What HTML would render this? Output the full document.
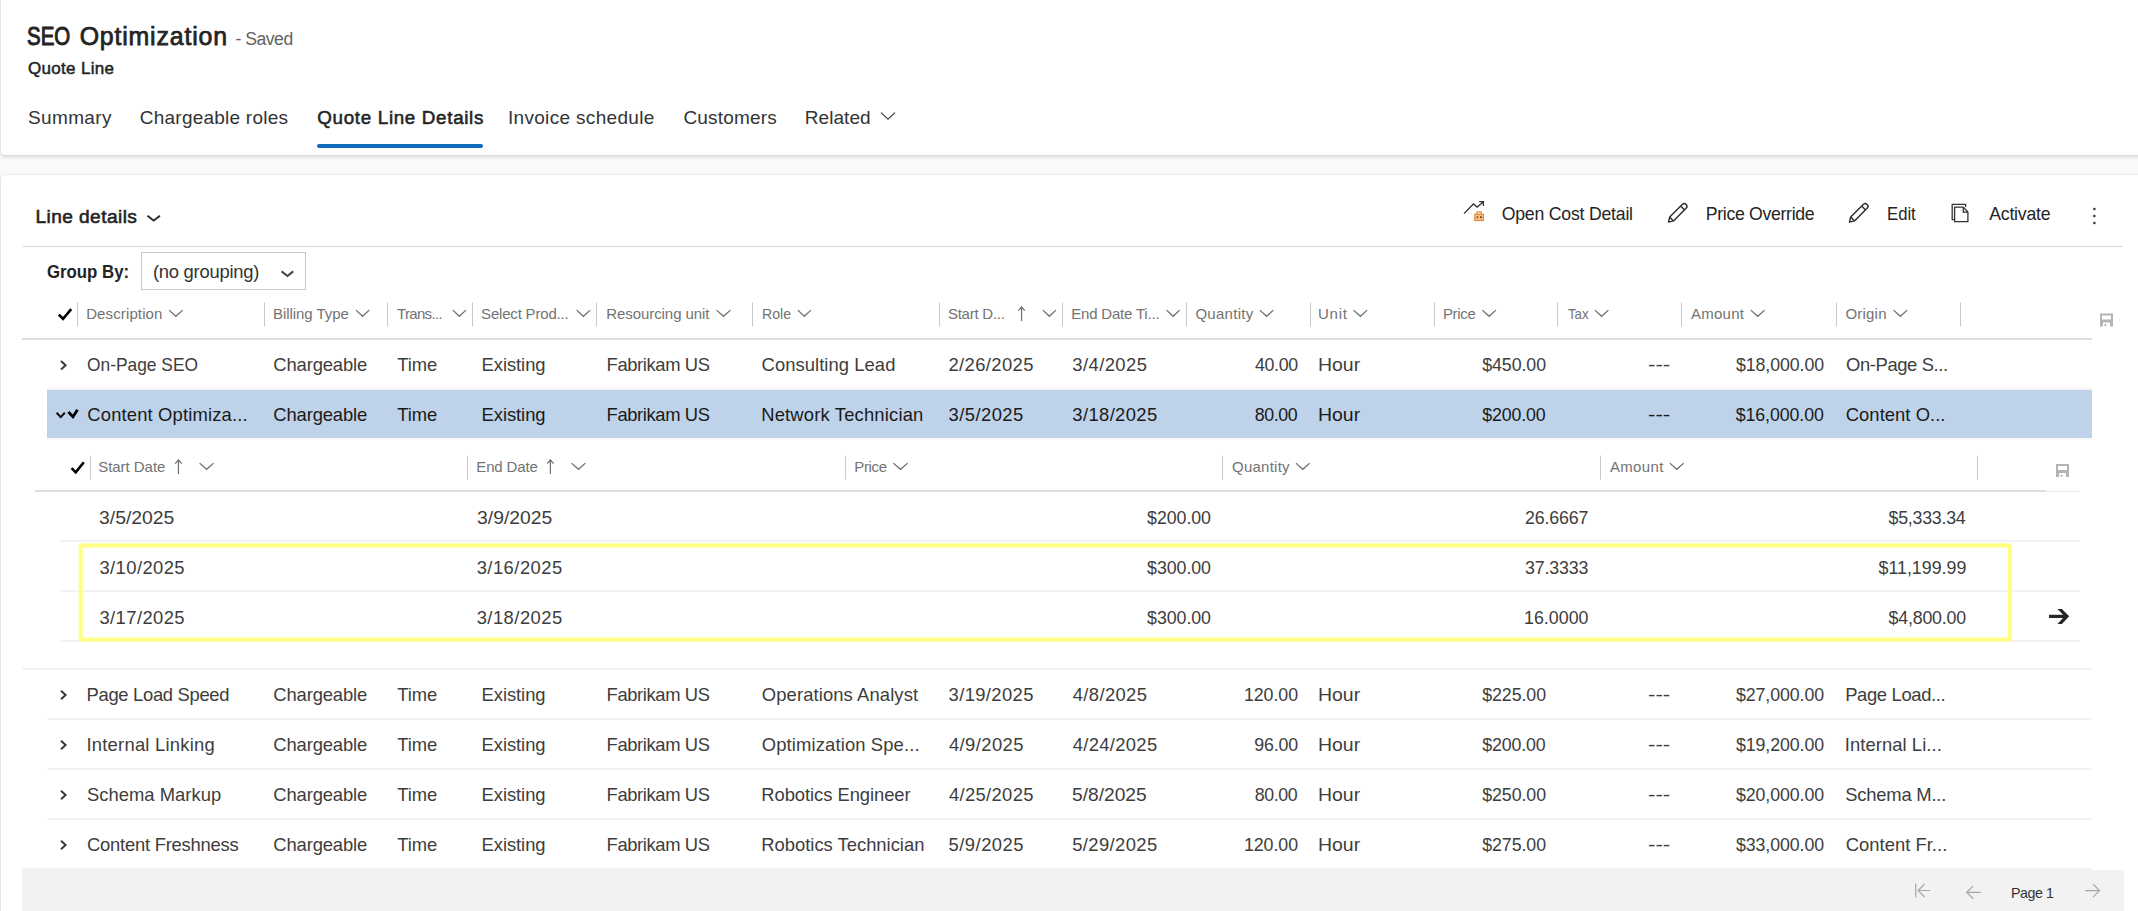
<!DOCTYPE html>
<html lang="en"><head><meta charset="utf-8"><title>SEO Optimization - Quote Line</title>
<style>
html,body{margin:0;padding:0;background:#fafafa}
body{width:2138px;height:911px;overflow:hidden}
#root{position:relative;width:2138px;height:911px;overflow:hidden;background:#fafafa;font-family:"Liberation Sans",sans-serif}
.card{position:absolute;background:#fff;border-radius:4px;box-shadow:0 2px 4px rgba(0,0,0,.13),0 0 2px rgba(0,0,0,.12)}
#c1{left:1px;top:-8px;width:2160px;height:163px}
#c2{left:1px;top:175px;width:2160px;height:760px}
.b{position:absolute}
.t{position:absolute;white-space:pre}
svg#ov{position:absolute;left:0;top:0}

</style></head>
<body>
<div id="root">
<div class="card" id="c1"></div>
<div class="card" id="c2"></div>
<div class="b" style="left:141px;top:252px;width:165px;height:38px;background:#fff;box-sizing:border-box;border:1px solid #c8c8c8"></div>
<div class="b" style="left:22px;top:338px;width:2070px;height:2px;background:#dedede;"></div>
<div class="b" style="left:47px;top:388px;width:2045px;height:2px;background:#f4f4f4;"></div>
<div class="b" style="left:47px;top:438px;width:2045px;height:2px;background:#f8f8f8;"></div>
<div class="b" style="left:47px;top:718px;width:2045px;height:2px;background:#f3f3f3;"></div>
<div class="b" style="left:47px;top:768px;width:2045px;height:2px;background:#f3f3f3;"></div>
<div class="b" style="left:47px;top:818px;width:2045px;height:2px;background:#f3f3f3;"></div>
<div class="b" style="left:22px;top:668px;width:2070px;height:2px;background:#f3f3f3;"></div>
<div class="b" style="left:47px;top:390px;width:2045px;height:48px;background:#bed3e9;"></div>
<div class="b" style="left:35px;top:490px;width:2011px;height:2px;background:#dedede;"></div>
<div class="b" style="left:2046px;top:491px;width:34px;height:1px;background:#e6e6e6;"></div>
<div class="b" style="left:60px;top:540px;width:2020px;height:2px;background:#f2f2f2;"></div>
<div class="b" style="left:60px;top:590px;width:2020px;height:2px;background:#f2f2f2;"></div>
<div class="b" style="left:60px;top:640px;width:2020px;height:2px;background:#f2f2f2;"></div>
<div class="b" style="left:22px;top:868px;width:2070px;height:50px;background:#f2f2f2;"></div>
<div class="b" style="left:2092px;top:870px;width:32px;height:50px;background:#f2f2f2;"></div>
<svg id="ov" width="2138" height="911" viewBox="0 0 2138 911" fill="none">
<rect x="317" y="144" width="166" height="4" rx="2" fill="#0f6cbd"/>
<path d="M880.951 112.61999999999999L888.0 119.16399999999999L895.049 112.61999999999999" stroke="#424242" stroke-width="1.3" stroke-linecap="butt" stroke-linejoin="miter"/>
<path d="M147.513 215.76L153.7 220.632L159.887 215.76" stroke="#242424" stroke-width="1.9" stroke-linecap="butt" stroke-linejoin="miter"/>
<path d="M23 246.5L2122.5 246.5" stroke="#d4d4d4" stroke-width="1"/>
<path d="M1464 213.6L1473.4 204L1477.1 207.1L1483.2 202M1479.2 201.6H1483.4V205.9" stroke="#333" stroke-width="1.3"/>
<rect x="1476.9" y="212" width="4.4" height="2.6" stroke="#e08a3c" stroke-width="1.2"/>
<rect x="1474.7" y="214.2" width="8.8" height="6.4" fill="#f6c08c" stroke="#e08a3c" stroke-width="1.1"/>
<rect x="1476.6" y="216.3" width="1.6" height="1.9" fill="#8a4b12"/><rect x="1480" y="216.3" width="1.8" height="2" fill="#8a4b12"/>
<g transform="translate(1667.8 202.7)" stroke="#2e2e2e" stroke-width="1.45" stroke-linejoin="round"><path d="M0.7 19.4L1.9 14.4L14.7 1.6a2.7 2.7 0 0 1 3.8 3.8L5.7 18.2Z"/><path d="M12.9 3.4L16.7 7.2M1.9 14.4L5.7 18.2"/></g>
<g transform="translate(1848.8 202.7)" stroke="#2e2e2e" stroke-width="1.45" stroke-linejoin="round"><path d="M0.7 19.4L1.9 14.4L14.7 1.6a2.7 2.7 0 0 1 3.8 3.8L5.7 18.2Z"/><path d="M12.9 3.4L16.7 7.2M1.9 14.4L5.7 18.2"/></g>
<path d="M1954.6 207.1H1963.3L1967.9 212.1V221.6H1954.6Z M1963.3 207.1V212.1H1967.9" stroke="#333" stroke-width="1.3" stroke-linejoin="miter"/>
<path d="M1954.6 219.6H1952.2V204.4H1965.6V207.1" stroke="#333" stroke-width="1.3"/>
<circle cx="2094.4" cy="208.9" r="1.25" fill="#333"/>
<circle cx="2094.4" cy="215.9" r="1.25" fill="#333"/>
<circle cx="2094.4" cy="223.1" r="1.25" fill="#333"/>
<path d="M281.64000000000004 271.40000000000003L287.45000000000005 275.96L293.26 271.40000000000003" stroke="#444" stroke-width="2" stroke-linecap="butt" stroke-linejoin="miter"/>
<path d="M58.8 314.625L63.04 318.8L71.2 309.1" stroke="#000" stroke-width="2.6" stroke-linejoin="miter"/>
<path d="M77.5 302.5L77.5 326.5" stroke="#c8c8c8" stroke-width="1"/>
<path d="M264.5 302.5L264.5 326.5" stroke="#c8c8c8" stroke-width="1"/>
<path d="M387.5 302.5L387.5 326.5" stroke="#c8c8c8" stroke-width="1"/>
<path d="M472.5 302.5L472.5 326.5" stroke="#c8c8c8" stroke-width="1"/>
<path d="M596.5 302.5L596.5 326.5" stroke="#c8c8c8" stroke-width="1"/>
<path d="M752.5 302.5L752.5 326.5" stroke="#c8c8c8" stroke-width="1"/>
<path d="M939.5 302.5L939.5 326.5" stroke="#c8c8c8" stroke-width="1"/>
<path d="M1062.5 302.5L1062.5 326.5" stroke="#c8c8c8" stroke-width="1"/>
<path d="M1186.5 302.5L1186.5 326.5" stroke="#c8c8c8" stroke-width="1"/>
<path d="M1310.5 302.5L1310.5 326.5" stroke="#c8c8c8" stroke-width="1"/>
<path d="M1434.5 302.5L1434.5 326.5" stroke="#c8c8c8" stroke-width="1"/>
<path d="M1557.5 302.5L1557.5 326.5" stroke="#c8c8c8" stroke-width="1"/>
<path d="M1681.5 302.5L1681.5 326.5" stroke="#c8c8c8" stroke-width="1"/>
<path d="M1836.5 302.5L1836.5 326.5" stroke="#c8c8c8" stroke-width="1"/>
<path d="M1960.5 302.5L1960.5 326.5" stroke="#c8c8c8" stroke-width="1"/>
<path d="M169.0875 310.1L175.875 316.3L182.6625 310.1" stroke="#6e6e6e" stroke-width="1.25" stroke-linecap="butt" stroke-linejoin="miter"/>
<path d="M356.0875 310.1L362.625 316.3L369.1625 310.1" stroke="#6e6e6e" stroke-width="1.25" stroke-linecap="butt" stroke-linejoin="miter"/>
<path d="M452.8375 310.1L459.375 316.3L465.9125 310.1" stroke="#6e6e6e" stroke-width="1.25" stroke-linecap="butt" stroke-linejoin="miter"/>
<path d="M576.5875 310.1L583.375 316.3L590.1625 310.1" stroke="#6e6e6e" stroke-width="1.25" stroke-linecap="butt" stroke-linejoin="miter"/>
<path d="M716.5875 310.1L723.5 316.3L730.4125 310.1" stroke="#6e6e6e" stroke-width="1.25" stroke-linecap="butt" stroke-linejoin="miter"/>
<path d="M797.8375 310.1L804.375 316.3L810.9125 310.1" stroke="#6e6e6e" stroke-width="1.25" stroke-linecap="butt" stroke-linejoin="miter"/>
<path d="M1042.8375 310.1L1049.375 316.3L1055.9125 310.1" stroke="#6e6e6e" stroke-width="1.25" stroke-linecap="butt" stroke-linejoin="miter"/>
<path d="M1166.5875 310.1L1173.125 316.3L1179.6625 310.1" stroke="#6e6e6e" stroke-width="1.25" stroke-linecap="butt" stroke-linejoin="miter"/>
<path d="M1259.8375 310.1L1266.625 316.3L1273.4125 310.1" stroke="#6e6e6e" stroke-width="1.25" stroke-linecap="butt" stroke-linejoin="miter"/>
<path d="M1353.5875 310.1L1360.375 316.3L1367.1625 310.1" stroke="#6e6e6e" stroke-width="1.25" stroke-linecap="butt" stroke-linejoin="miter"/>
<path d="M1482.3375 310.1L1489.125 316.3L1495.9125 310.1" stroke="#6e6e6e" stroke-width="1.25" stroke-linecap="butt" stroke-linejoin="miter"/>
<path d="M1594.8375 310.1L1601.625 316.3L1608.4125 310.1" stroke="#6e6e6e" stroke-width="1.25" stroke-linecap="butt" stroke-linejoin="miter"/>
<path d="M1750.8375 310.1L1757.75 316.3L1764.6625 310.1" stroke="#6e6e6e" stroke-width="1.25" stroke-linecap="butt" stroke-linejoin="miter"/>
<path d="M1893.5875 310.1L1900.375 316.3L1907.1625 310.1" stroke="#6e6e6e" stroke-width="1.25" stroke-linecap="butt" stroke-linejoin="miter"/>
<path d="M1021.55 321L1021.55 307.1M1018.30 310.6L1021.55 307.0L1024.80 310.6" stroke="#6e6e6e" stroke-width="1.2"/>
<path fill-rule="evenodd" fill="#b4b4b4" d="M2100 313.5h13v13h-13z M2102 315.5v4h9v-4z M2103 322.5v4h7v-4z"/><rect x="2104.6" y="324.3" width="1.7" height="1.7" fill="#9a9a9a"/>
<path d="M61 361.0L65.6 365.2L61 369.4" stroke="#3a3a3a" stroke-width="2"/>
<path d="M61 690.8L65.6 695.0L61 699.2" stroke="#3a3a3a" stroke-width="2"/>
<path d="M61 740.8L65.6 745.0L61 749.2" stroke="#3a3a3a" stroke-width="2"/>
<path d="M61 790.8L65.6 795.0L61 799.2" stroke="#3a3a3a" stroke-width="2"/>
<path d="M61 840.8L65.6 845.0L61 849.2" stroke="#3a3a3a" stroke-width="2"/>
<path d="M56.6 412.7L60.7 417.1L64.8 412.7" stroke="#0a0a0a" stroke-width="2"/>
<path d="M68.4 412L73 416.7L77.5 409.8" stroke="#000" stroke-width="2.8"/>
<path d="M71.6 468.045L75.768 472.4L83.8 462.3" stroke="#000" stroke-width="2.6" stroke-linejoin="miter"/>
<path d="M90.5 455.5L90.5 479.5" stroke="#c8c8c8" stroke-width="1"/>
<path d="M467.5 455.5L467.5 479.5" stroke="#c8c8c8" stroke-width="1"/>
<path d="M845.5 455.5L845.5 479.5" stroke="#c8c8c8" stroke-width="1"/>
<path d="M1222.5 455.5L1222.5 479.5" stroke="#c8c8c8" stroke-width="1"/>
<path d="M1600.5 455.5L1600.5 479.5" stroke="#c8c8c8" stroke-width="1"/>
<path d="M1977.5 455.5L1977.5 479.5" stroke="#c8c8c8" stroke-width="1"/>
<path d="M178.45 474L178.45 460.1M175.20 463.6L178.45 460.0L181.70 463.6" stroke="#6e6e6e" stroke-width="1.2"/>
<path d="M199.63750000000002 463.1L206.60000000000002 469.3L213.5625 463.1" stroke="#6e6e6e" stroke-width="1.25" stroke-linecap="butt" stroke-linejoin="miter"/>
<path d="M550.40 474L550.40 460.1M547.20 463.6L550.40 460.0L553.60 463.6" stroke="#6e6e6e" stroke-width="1.2"/>
<path d="M571.5375 463.1L578.45 469.3L585.3625000000001 463.1" stroke="#6e6e6e" stroke-width="1.25" stroke-linecap="butt" stroke-linejoin="miter"/>
<path d="M893.3375 463.1L900.5 469.3L907.6625 463.1" stroke="#6e6e6e" stroke-width="1.25" stroke-linecap="butt" stroke-linejoin="miter"/>
<path d="M1295.9375 463.1L1302.8 469.3L1309.6625 463.1" stroke="#6e6e6e" stroke-width="1.25" stroke-linecap="butt" stroke-linejoin="miter"/>
<path d="M1669.8375 463.1L1676.75 469.3L1683.6625 463.1" stroke="#6e6e6e" stroke-width="1.25" stroke-linecap="butt" stroke-linejoin="miter"/>
<path fill-rule="evenodd" fill="#b4b4b4" d="M2056 464h13v13h-13z M2058 466v4h9v-4z M2059 473v4h7v-4z"/><rect x="2060.6" y="474.8" width="1.7" height="1.7" fill="#9a9a9a"/>
<rect x="80.65" y="545.45" width="1929.3" height="94.1" stroke="#ffff84" stroke-width="4.1"/>
<path fill="#262626" d="M2057.4 609.05H2061.95L2069.15 616.3L2061.95 623.9H2057.4L2064.6 616.3Z M2049.05 614.65H2065V617.95H2049.05Z"/>
<path d="M1915.7 883.5V897.6M1918.2 890.5H1930.4M1924.6 884L1918.1 890.5L1924.6 897" stroke="#a6a6a6" stroke-width="1.2"/>
<path d="M1966.6 892.3H1980.8M1973.2 885.9L1966.7 892.3L1973.2 898.7" stroke="#a6a6a6" stroke-width="1.2"/>
<path d="M2085 890.6H2099.6M2093 884.1L2099.5 890.6L2093 897.1" stroke="#a6a6a6" stroke-width="1.2"/>
</svg>
<span class="t" id="t0" style="font-size:24.9px;line-height:29.88px;top:22.01px;color:#242424;letter-spacing:0.000px;left:26.71px;-webkit-text-stroke:1.0px #242424;transform:scaleX(0.8211);transform-origin:0 0;">SEO</span>
<span class="t" id="t1" style="font-size:24.9px;line-height:29.88px;top:22.01px;color:#242424;letter-spacing:0.817px;left:79.67px;-webkit-text-stroke:0.75px #242424;">Optimization</span>
<span class="t" id="t2" style="font-size:17.6px;line-height:21.12px;top:29.01px;color:#636363;letter-spacing:-0.497px;left:235.53px;">- Saved</span>
<span class="t" id="t3" style="font-size:17px;line-height:20.40px;top:59.00px;color:#242424;letter-spacing:0.331px;left:27.93px;-webkit-text-stroke:0.5px #242424;">Quote Line</span>
<span class="t" id="t4" style="font-size:19.0px;line-height:22.80px;top:107.00px;color:#333;letter-spacing:0.393px;left:27.91px;">Summary</span>
<span class="t" id="t5" style="font-size:19.0px;line-height:22.80px;top:107.00px;color:#333;letter-spacing:0.234px;left:139.78px;">Chargeable roles</span>
<span class="t" id="t6" style="font-size:18.8px;line-height:22.56px;top:107.00px;color:#242424;letter-spacing:0.676px;left:317.33px;-webkit-text-stroke:0.55px #242424;">Quote Line Details</span>
<span class="t" id="t7" style="font-size:19.0px;line-height:22.80px;top:107.00px;color:#333;letter-spacing:0.329px;left:507.88px;">Invoice schedule</span>
<span class="t" id="t8" style="font-size:19.0px;line-height:22.80px;top:107.00px;color:#333;letter-spacing:0.188px;left:683.38px;">Customers</span>
<span class="t" id="t9" style="font-size:19.0px;line-height:22.80px;top:107.00px;color:#333;letter-spacing:0.061px;left:804.75px;">Related</span>
<span class="t" id="t10" style="font-size:19.1px;line-height:22.92px;top:206.01px;color:#242424;letter-spacing:0.433px;left:35.50px;-webkit-text-stroke:0.6px #242424;">Line details</span>
<span class="t" id="t11" style="font-size:17.7px;line-height:21.24px;top:204.01px;color:#242424;letter-spacing:-0.218px;left:1501.63px;">Open Cost Detail</span>
<span class="t" id="t12" style="font-size:17.7px;line-height:21.24px;top:204.01px;color:#242424;letter-spacing:-0.323px;left:1705.79px;">Price Override</span>
<span class="t" id="t13" style="font-size:17.7px;line-height:21.24px;top:204.01px;color:#242424;letter-spacing:0.000px;left:1887.25px;transform:scaleX(0.9436);transform-origin:0 0;">Edit</span>
<span class="t" id="t14" style="font-size:17.7px;line-height:21.24px;top:204.01px;color:#242424;letter-spacing:-0.211px;left:1989.17px;">Activate</span>
<span class="t" id="t15" style="font-size:18.4px;line-height:22.08px;top:261.01px;color:#242424;letter-spacing:0.000px;left:47.26px;font-weight:700;transform:scaleX(0.9132);transform-origin:0 0;">Group By:</span>
<span class="t" id="t16" style="font-size:18.4px;line-height:22.08px;top:261.01px;color:#333;letter-spacing:-0.251px;left:152.94px;">(no grouping)</span>
<span class="t" id="t17" style="font-size:15.0px;line-height:18.00px;top:305.01px;color:#737373;letter-spacing:0.121px;left:86.17px;">Description</span>
<span class="t" id="t18" style="font-size:15.0px;line-height:18.00px;top:305.01px;color:#737373;letter-spacing:-0.036px;left:272.91px;">Billing Type</span>
<span class="t" id="t19" style="font-size:15.0px;line-height:18.00px;top:305.01px;color:#737373;letter-spacing:-0.687px;left:397.09px;">Trans...</span>
<span class="t" id="t20" style="font-size:15.0px;line-height:18.00px;top:305.01px;color:#737373;letter-spacing:-0.193px;left:481.11px;">Select Prod...</span>
<span class="t" id="t21" style="font-size:15.0px;line-height:18.00px;top:305.01px;color:#737373;letter-spacing:-0.062px;left:606.17px;">Resourcing unit</span>
<span class="t" id="t22" style="font-size:15.0px;line-height:18.00px;top:305.01px;color:#737373;letter-spacing:0.000px;left:761.65px;transform:scaleX(0.9429);transform-origin:0 0;">Role</span>
<span class="t" id="t23" style="font-size:15.0px;line-height:18.00px;top:305.01px;color:#737373;letter-spacing:-0.233px;left:947.89px;">Start D...</span>
<span class="t" id="t24" style="font-size:15.0px;line-height:18.00px;top:305.01px;color:#737373;letter-spacing:-0.188px;left:1071.17px;">End Date Ti...</span>
<span class="t" id="t25" style="font-size:15.0px;line-height:18.00px;top:305.01px;color:#737373;letter-spacing:0.298px;left:1195.39px;">Quantity</span>
<span class="t" id="t26" style="font-size:15.0px;line-height:18.00px;top:305.01px;color:#737373;letter-spacing:0.770px;left:1318.02px;">Unit</span>
<span class="t" id="t27" style="font-size:15.0px;line-height:18.00px;top:305.01px;color:#737373;letter-spacing:-0.319px;left:1442.92px;">Price</span>
<span class="t" id="t28" style="font-size:15.0px;line-height:18.00px;top:305.01px;color:#737373;letter-spacing:0.000px;left:1567.58px;transform:scaleX(0.8829);transform-origin:0 0;">Tax</span>
<span class="t" id="t29" style="font-size:15.0px;line-height:18.00px;top:305.01px;color:#737373;letter-spacing:0.268px;left:1690.88px;">Amount</span>
<span class="t" id="t30" style="font-size:15.0px;line-height:18.00px;top:305.01px;color:#737373;letter-spacing:0.217px;left:1845.39px;">Origin</span>
<span class="t" id="t31" style="font-size:18.4px;line-height:22.08px;top:354.01px;color:#3d3d3d;letter-spacing:0.000px;left:86.70px;transform:scaleX(0.9441);transform-origin:0 0;">On-Page SEO</span>
<span class="t" id="t32" style="font-size:18.4px;line-height:22.08px;top:354.01px;color:#3d3d3d;letter-spacing:-0.141px;left:273.37px;">Chargeable</span>
<span class="t" id="t33" style="font-size:18.4px;line-height:22.08px;top:354.01px;color:#3d3d3d;letter-spacing:-0.093px;left:397.26px;">Time</span>
<span class="t" id="t34" style="font-size:18.4px;line-height:22.08px;top:354.01px;color:#3d3d3d;letter-spacing:-0.060px;left:481.55px;">Existing</span>
<span class="t" id="t35" style="font-size:18.4px;line-height:22.08px;top:354.01px;color:#3d3d3d;letter-spacing:-0.392px;left:606.55px;">Fabrikam US</span>
<span class="t" id="t36" style="font-size:18.4px;line-height:22.08px;top:354.01px;color:#3d3d3d;letter-spacing:0.062px;left:761.59px;">Consulting Lead</span>
<span class="t" id="t37" style="font-size:18.4px;line-height:22.08px;top:354.01px;color:#3d3d3d;letter-spacing:0.402px;left:948.38px;">2/26/2025</span>
<span class="t" id="t38" style="font-size:18.4px;line-height:22.08px;top:354.01px;color:#3d3d3d;letter-spacing:0.450px;left:1072.23px;">3/4/2025</span>
<span class="t" id="t39" style="font-size:17.8px;line-height:21.36px;top:355.01px;color:#3d3d3d;letter-spacing:-0.350px;left:1255.01px;">40.00</span>
<span class="t" id="t40" style="font-size:18.4px;line-height:22.08px;top:354.01px;color:#3d3d3d;letter-spacing:0.000px;left:1318.18px;transform:scaleX(1.0578);transform-origin:0 0;">Hour</span>
<span class="t" id="t41" style="font-size:17.8px;line-height:21.36px;top:355.01px;color:#3d3d3d;letter-spacing:-0.063px;left:1482.18px;">$450.00</span>
<span class="t" id="t42" style="font-size:18.4px;line-height:22.08px;top:354.01px;color:#3d3d3d;letter-spacing:0.000px;left:1647.50px;transform:scaleX(1.2091);transform-origin:0 0;">---</span>
<span class="t" id="t43" style="font-size:17.8px;line-height:21.36px;top:355.01px;color:#3d3d3d;letter-spacing:-0.076px;left:1735.89px;">$18,000.00</span>
<span class="t" id="t44" style="font-size:18.4px;line-height:22.08px;top:354.01px;color:#3d3d3d;letter-spacing:-0.383px;left:1845.99px;">On-Page S...</span>
<span class="t" id="t45" style="font-size:18.4px;line-height:22.08px;top:404.01px;color:#1a1a1a;letter-spacing:0.160px;left:87.31px;">Content Optimiza...</span>
<span class="t" id="t46" style="font-size:18.4px;line-height:22.08px;top:404.01px;color:#1a1a1a;letter-spacing:-0.141px;left:273.37px;">Chargeable</span>
<span class="t" id="t47" style="font-size:18.4px;line-height:22.08px;top:404.01px;color:#1a1a1a;letter-spacing:-0.093px;left:397.26px;">Time</span>
<span class="t" id="t48" style="font-size:18.4px;line-height:22.08px;top:404.01px;color:#1a1a1a;letter-spacing:-0.060px;left:481.55px;">Existing</span>
<span class="t" id="t49" style="font-size:18.4px;line-height:22.08px;top:404.01px;color:#1a1a1a;letter-spacing:-0.392px;left:606.55px;">Fabrikam US</span>
<span class="t" id="t50" style="font-size:18.4px;line-height:22.08px;top:404.01px;color:#1a1a1a;letter-spacing:0.173px;left:761.21px;">Network Technician</span>
<span class="t" id="t51" style="font-size:18.4px;line-height:22.08px;top:404.01px;color:#1a1a1a;letter-spacing:0.447px;left:948.54px;">3/5/2025</span>
<span class="t" id="t52" style="font-size:18.4px;line-height:22.08px;top:404.01px;color:#1a1a1a;letter-spacing:0.370px;left:1072.37px;">3/18/2025</span>
<span class="t" id="t53" style="font-size:17.8px;line-height:21.36px;top:405.01px;color:#1a1a1a;letter-spacing:-0.385px;left:1254.72px;">80.00</span>
<span class="t" id="t54" style="font-size:18.4px;line-height:22.08px;top:404.01px;color:#1a1a1a;letter-spacing:0.000px;left:1318.18px;transform:scaleX(1.0578);transform-origin:0 0;">Hour</span>
<span class="t" id="t55" style="font-size:17.8px;line-height:21.36px;top:405.01px;color:#1a1a1a;letter-spacing:-0.150px;left:1482.28px;">$200.00</span>
<span class="t" id="t56" style="font-size:18.4px;line-height:22.08px;top:404.01px;color:#1a1a1a;letter-spacing:0.000px;left:1647.50px;transform:scaleX(1.2091);transform-origin:0 0;">---</span>
<span class="t" id="t57" style="font-size:17.8px;line-height:21.36px;top:405.01px;color:#1a1a1a;letter-spacing:-0.076px;left:1735.63px;">$16,000.00</span>
<span class="t" id="t58" style="font-size:18.4px;line-height:22.08px;top:404.01px;color:#1a1a1a;letter-spacing:0.045px;left:1845.78px;">Content O...</span>
<span class="t" id="t59" style="font-size:18.4px;line-height:22.08px;top:684.00px;color:#3d3d3d;letter-spacing:-0.311px;left:86.55px;">Page Load Speed</span>
<span class="t" id="t60" style="font-size:18.4px;line-height:22.08px;top:684.00px;color:#3d3d3d;letter-spacing:-0.141px;left:273.37px;">Chargeable</span>
<span class="t" id="t61" style="font-size:18.4px;line-height:22.08px;top:684.00px;color:#3d3d3d;letter-spacing:-0.093px;left:397.26px;">Time</span>
<span class="t" id="t62" style="font-size:18.4px;line-height:22.08px;top:684.00px;color:#3d3d3d;letter-spacing:-0.060px;left:481.55px;">Existing</span>
<span class="t" id="t63" style="font-size:18.4px;line-height:22.08px;top:684.00px;color:#3d3d3d;letter-spacing:-0.392px;left:606.55px;">Fabrikam US</span>
<span class="t" id="t64" style="font-size:18.4px;line-height:22.08px;top:684.00px;color:#3d3d3d;letter-spacing:0.113px;left:761.80px;">Operations Analyst</span>
<span class="t" id="t65" style="font-size:18.4px;line-height:22.08px;top:684.00px;color:#3d3d3d;letter-spacing:0.380px;left:948.56px;">3/19/2025</span>
<span class="t" id="t66" style="font-size:18.4px;line-height:22.08px;top:684.00px;color:#3d3d3d;letter-spacing:0.388px;left:1072.66px;">4/8/2025</span>
<span class="t" id="t67" style="font-size:17.8px;line-height:21.36px;top:685.01px;color:#3d3d3d;letter-spacing:-0.054px;left:1243.96px;">120.00</span>
<span class="t" id="t68" style="font-size:18.4px;line-height:22.08px;top:684.00px;color:#3d3d3d;letter-spacing:0.000px;left:1318.18px;transform:scaleX(1.0578);transform-origin:0 0;">Hour</span>
<span class="t" id="t69" style="font-size:17.8px;line-height:21.36px;top:685.01px;color:#3d3d3d;letter-spacing:-0.063px;left:1482.18px;">$225.00</span>
<span class="t" id="t70" style="font-size:18.4px;line-height:22.08px;top:684.00px;color:#3d3d3d;letter-spacing:0.000px;left:1647.50px;transform:scaleX(1.2091);transform-origin:0 0;">---</span>
<span class="t" id="t71" style="font-size:17.8px;line-height:21.36px;top:685.01px;color:#3d3d3d;letter-spacing:-0.076px;left:1735.89px;">$27,000.00</span>
<span class="t" id="t72" style="font-size:18.4px;line-height:22.08px;top:684.00px;color:#3d3d3d;letter-spacing:-0.343px;left:1845.18px;">Page Load...</span>
<span class="t" id="t73" style="font-size:18.4px;line-height:22.08px;top:734.01px;color:#3d3d3d;letter-spacing:0.242px;left:86.42px;">Internal Linking</span>
<span class="t" id="t74" style="font-size:18.4px;line-height:22.08px;top:734.01px;color:#3d3d3d;letter-spacing:-0.141px;left:273.37px;">Chargeable</span>
<span class="t" id="t75" style="font-size:18.4px;line-height:22.08px;top:734.01px;color:#3d3d3d;letter-spacing:-0.093px;left:397.26px;">Time</span>
<span class="t" id="t76" style="font-size:18.4px;line-height:22.08px;top:734.01px;color:#3d3d3d;letter-spacing:-0.060px;left:481.55px;">Existing</span>
<span class="t" id="t77" style="font-size:18.4px;line-height:22.08px;top:734.01px;color:#3d3d3d;letter-spacing:-0.392px;left:606.55px;">Fabrikam US</span>
<span class="t" id="t78" style="font-size:18.4px;line-height:22.08px;top:734.01px;color:#3d3d3d;letter-spacing:0.133px;left:761.80px;">Optimization Spe...</span>
<span class="t" id="t79" style="font-size:18.4px;line-height:22.08px;top:734.01px;color:#3d3d3d;letter-spacing:0.424px;left:948.94px;">4/9/2025</span>
<span class="t" id="t80" style="font-size:18.4px;line-height:22.08px;top:734.01px;color:#3d3d3d;letter-spacing:0.329px;left:1072.66px;">4/24/2025</span>
<span class="t" id="t81" style="font-size:17.8px;line-height:21.36px;top:735.01px;color:#3d3d3d;letter-spacing:-0.134px;left:1254.15px;">96.00</span>
<span class="t" id="t82" style="font-size:18.4px;line-height:22.08px;top:734.01px;color:#3d3d3d;letter-spacing:0.000px;left:1318.18px;transform:scaleX(1.0578);transform-origin:0 0;">Hour</span>
<span class="t" id="t83" style="font-size:17.8px;line-height:21.36px;top:735.01px;color:#3d3d3d;letter-spacing:-0.150px;left:1482.28px;">$200.00</span>
<span class="t" id="t84" style="font-size:18.4px;line-height:22.08px;top:734.01px;color:#3d3d3d;letter-spacing:0.000px;left:1647.50px;transform:scaleX(1.2091);transform-origin:0 0;">---</span>
<span class="t" id="t85" style="font-size:17.8px;line-height:21.36px;top:735.01px;color:#3d3d3d;letter-spacing:-0.076px;left:1735.89px;">$19,200.00</span>
<span class="t" id="t86" style="font-size:18.4px;line-height:22.08px;top:734.01px;color:#3d3d3d;letter-spacing:0.064px;left:1844.83px;">Internal Li...</span>
<span class="t" id="t87" style="font-size:18.4px;line-height:22.08px;top:784.01px;color:#3d3d3d;letter-spacing:0.027px;left:86.95px;">Schema Markup</span>
<span class="t" id="t88" style="font-size:18.4px;line-height:22.08px;top:784.01px;color:#3d3d3d;letter-spacing:-0.141px;left:273.37px;">Chargeable</span>
<span class="t" id="t89" style="font-size:18.4px;line-height:22.08px;top:784.01px;color:#3d3d3d;letter-spacing:-0.093px;left:397.26px;">Time</span>
<span class="t" id="t90" style="font-size:18.4px;line-height:22.08px;top:784.01px;color:#3d3d3d;letter-spacing:-0.060px;left:481.55px;">Existing</span>
<span class="t" id="t91" style="font-size:18.4px;line-height:22.08px;top:784.01px;color:#3d3d3d;letter-spacing:-0.392px;left:606.55px;">Fabrikam US</span>
<span class="t" id="t92" style="font-size:18.4px;line-height:22.08px;top:784.01px;color:#3d3d3d;letter-spacing:-0.058px;left:761.31px;">Robotics Engineer</span>
<span class="t" id="t93" style="font-size:18.4px;line-height:22.08px;top:784.01px;color:#3d3d3d;letter-spacing:0.333px;left:948.94px;">4/25/2025</span>
<span class="t" id="t94" style="font-size:18.4px;line-height:22.08px;top:784.01px;color:#3d3d3d;letter-spacing:0.000px;left:1072.36px;transform:scaleX(1.0434);transform-origin:0 0;">5/8/2025</span>
<span class="t" id="t95" style="font-size:17.8px;line-height:21.36px;top:785.01px;color:#3d3d3d;letter-spacing:-0.385px;left:1254.72px;">80.00</span>
<span class="t" id="t96" style="font-size:18.4px;line-height:22.08px;top:784.01px;color:#3d3d3d;letter-spacing:0.000px;left:1318.18px;transform:scaleX(1.0578);transform-origin:0 0;">Hour</span>
<span class="t" id="t97" style="font-size:17.8px;line-height:21.36px;top:785.01px;color:#3d3d3d;letter-spacing:-0.063px;left:1482.18px;">$250.00</span>
<span class="t" id="t98" style="font-size:18.4px;line-height:22.08px;top:784.01px;color:#3d3d3d;letter-spacing:0.000px;left:1647.50px;transform:scaleX(1.2091);transform-origin:0 0;">---</span>
<span class="t" id="t99" style="font-size:17.8px;line-height:21.36px;top:785.01px;color:#3d3d3d;letter-spacing:-0.076px;left:1735.89px;">$20,000.00</span>
<span class="t" id="t100" style="font-size:18.4px;line-height:22.08px;top:784.01px;color:#3d3d3d;letter-spacing:-0.223px;left:1845.33px;">Schema M...</span>
<span class="t" id="t101" style="font-size:18.4px;line-height:22.08px;top:834.01px;color:#3d3d3d;letter-spacing:-0.237px;left:87.08px;">Content Freshness</span>
<span class="t" id="t102" style="font-size:18.4px;line-height:22.08px;top:834.01px;color:#3d3d3d;letter-spacing:-0.141px;left:273.37px;">Chargeable</span>
<span class="t" id="t103" style="font-size:18.4px;line-height:22.08px;top:834.01px;color:#3d3d3d;letter-spacing:-0.093px;left:397.26px;">Time</span>
<span class="t" id="t104" style="font-size:18.4px;line-height:22.08px;top:834.01px;color:#3d3d3d;letter-spacing:-0.060px;left:481.55px;">Existing</span>
<span class="t" id="t105" style="font-size:18.4px;line-height:22.08px;top:834.01px;color:#3d3d3d;letter-spacing:-0.392px;left:606.55px;">Fabrikam US</span>
<span class="t" id="t106" style="font-size:18.4px;line-height:22.08px;top:834.01px;color:#3d3d3d;letter-spacing:-0.008px;left:761.31px;">Robotics Technician</span>
<span class="t" id="t107" style="font-size:18.4px;line-height:22.08px;top:834.01px;color:#3d3d3d;letter-spacing:0.481px;left:948.54px;">5/9/2025</span>
<span class="t" id="t108" style="font-size:18.4px;line-height:22.08px;top:834.01px;color:#3d3d3d;letter-spacing:0.392px;left:1072.16px;">5/29/2025</span>
<span class="t" id="t109" style="font-size:17.8px;line-height:21.36px;top:835.01px;color:#3d3d3d;letter-spacing:-0.054px;left:1243.96px;">120.00</span>
<span class="t" id="t110" style="font-size:18.4px;line-height:22.08px;top:834.01px;color:#3d3d3d;letter-spacing:0.000px;left:1318.18px;transform:scaleX(1.0578);transform-origin:0 0;">Hour</span>
<span class="t" id="t111" style="font-size:17.8px;line-height:21.36px;top:835.01px;color:#3d3d3d;letter-spacing:-0.063px;left:1482.18px;">$275.00</span>
<span class="t" id="t112" style="font-size:18.4px;line-height:22.08px;top:834.01px;color:#3d3d3d;letter-spacing:0.000px;left:1647.50px;transform:scaleX(1.2091);transform-origin:0 0;">---</span>
<span class="t" id="t113" style="font-size:17.8px;line-height:21.36px;top:835.01px;color:#3d3d3d;letter-spacing:-0.076px;left:1735.89px;">$33,000.00</span>
<span class="t" id="t114" style="font-size:18.4px;line-height:22.08px;top:834.01px;color:#3d3d3d;letter-spacing:0.026px;left:1845.76px;">Content Fr...</span>
<span class="t" id="t115" style="font-size:15.0px;line-height:18.00px;top:458.01px;color:#737373;letter-spacing:-0.035px;left:98.19px;">Start Date</span>
<span class="t" id="t116" style="font-size:15.0px;line-height:18.00px;top:458.01px;color:#737373;letter-spacing:-0.141px;left:476.31px;">End Date</span>
<span class="t" id="t117" style="font-size:15.0px;line-height:18.00px;top:458.01px;color:#737373;letter-spacing:-0.390px;left:854.36px;">Price</span>
<span class="t" id="t118" style="font-size:15.0px;line-height:18.00px;top:458.01px;color:#737373;letter-spacing:0.252px;left:1231.98px;">Quantity</span>
<span class="t" id="t119" style="font-size:15.0px;line-height:18.00px;top:458.01px;color:#737373;letter-spacing:0.363px;left:1609.89px;">Amount</span>
<span class="t" id="t120" style="font-size:18.4px;line-height:22.08px;top:507.00px;color:#3d3d3d;letter-spacing:0.000px;left:99.05px;transform:scaleX(1.0524);transform-origin:0 0;">3/5/2025</span>
<span class="t" id="t121" style="font-size:18.4px;line-height:22.08px;top:507.00px;color:#3d3d3d;letter-spacing:0.000px;left:477.31px;transform:scaleX(1.0520);transform-origin:0 0;">3/9/2025</span>
<span class="t" id="t122" style="font-size:17.8px;line-height:21.36px;top:508.01px;color:#3d3d3d;letter-spacing:-0.068px;left:1147.11px;">$200.00</span>
<span class="t" id="t123" style="font-size:17.8px;line-height:21.36px;top:508.01px;color:#3d3d3d;letter-spacing:-0.128px;left:1524.96px;">26.6667</span>
<span class="t" id="t124" style="font-size:17.8px;line-height:21.36px;top:508.01px;color:#3d3d3d;letter-spacing:-0.253px;left:1888.59px;">$5,333.34</span>
<span class="t" id="t125" style="font-size:18.4px;line-height:22.08px;top:557.01px;color:#3d3d3d;letter-spacing:0.413px;left:99.45px;">3/10/2025</span>
<span class="t" id="t126" style="font-size:18.4px;line-height:22.08px;top:557.01px;color:#3d3d3d;letter-spacing:0.474px;left:476.63px;">3/16/2025</span>
<span class="t" id="t127" style="font-size:17.8px;line-height:21.36px;top:558.00px;color:#3d3d3d;letter-spacing:-0.068px;left:1147.11px;">$300.00</span>
<span class="t" id="t128" style="font-size:17.8px;line-height:21.36px;top:558.00px;color:#3d3d3d;letter-spacing:-0.149px;left:1525.02px;">37.3333</span>
<span class="t" id="t129" style="font-size:17.8px;line-height:21.36px;top:558.00px;color:#3d3d3d;letter-spacing:0.021px;left:1878.48px;">$11,199.99</span>
<span class="t" id="t130" style="font-size:18.4px;line-height:22.08px;top:607.00px;color:#3d3d3d;letter-spacing:0.413px;left:99.45px;">3/17/2025</span>
<span class="t" id="t131" style="font-size:18.4px;line-height:22.08px;top:607.00px;color:#3d3d3d;letter-spacing:0.474px;left:476.63px;">3/18/2025</span>
<span class="t" id="t132" style="font-size:17.8px;line-height:21.36px;top:608.01px;color:#3d3d3d;letter-spacing:-0.068px;left:1147.11px;">$300.00</span>
<span class="t" id="t133" style="font-size:17.8px;line-height:21.36px;top:608.01px;color:#3d3d3d;letter-spacing:0.024px;left:1524.02px;">16.0000</span>
<span class="t" id="t134" style="font-size:17.8px;line-height:21.36px;top:608.01px;color:#3d3d3d;letter-spacing:-0.193px;left:1888.59px;">$4,800.00</span>
<span class="t" id="t135" style="font-size:14.2px;line-height:17.04px;top:885.00px;color:#333;letter-spacing:-0.414px;left:2010.95px;">Page 1</span>
</div>
</body></html>
